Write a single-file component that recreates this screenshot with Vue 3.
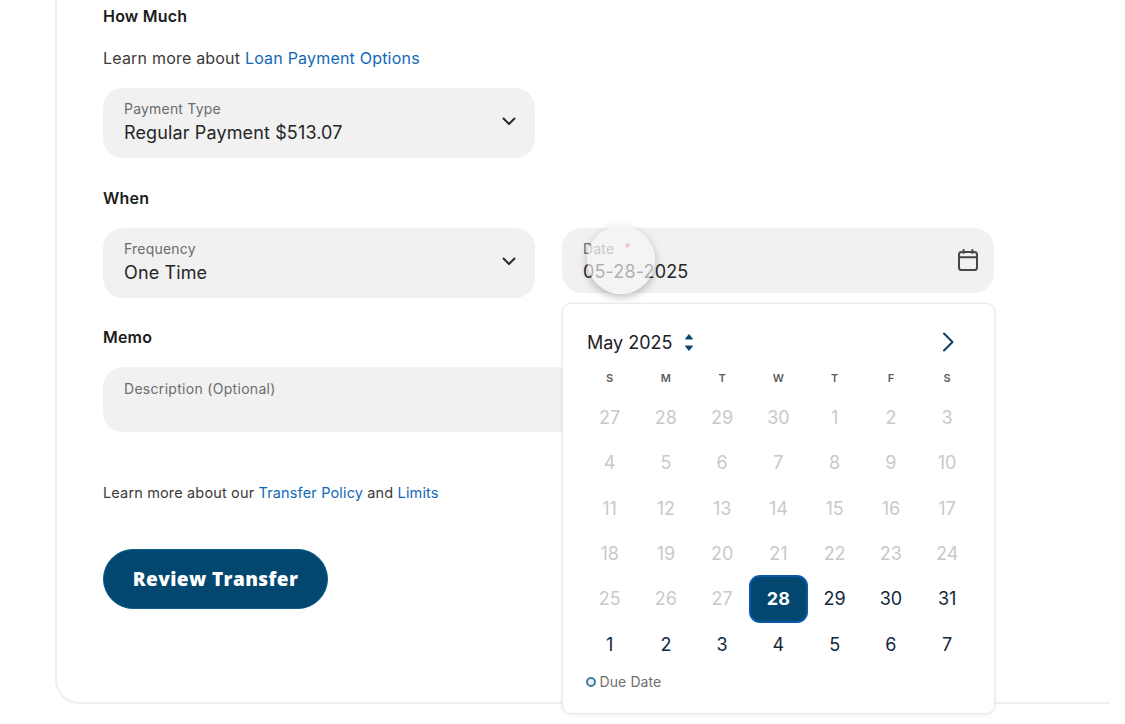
<script setup>
const weekdays = ['S', 'M', 'T', 'W', 'T', 'F', 'S']
const days = [
  27, 28, 29, 30, 1, 2, 3, 4, 5, 6, 7, 8, 9, 10, 11, 12, 13, 14, 15, 16, 17,
  18, 19, 20, 21, 22, 23, 24, 25, 26, 27, 28, 29, 30, 31, 1, 2, 3, 4, 5, 6, 7,
].map((n, i) => ({
  n,
  id: i,
  muted: i < 31,
  selected: i === 31,
}))
</script>

<template>
  <div class="page">
    <main class="card">
      <h2 class="heading first">How Much</h2>
      <p class="learn">Learn more about <a class="link">Loan Payment Options</a></p>

      <div class="field select">
        <div class="stack">
          <div class="label">Payment Type</div>
          <div class="value">Regular Payment $513.07</div>
        </div>
        <svg class="chev" viewBox="0 0 14 9" width="14" height="9"><path d="M1.5 1.5 7 7l5.5-5.5" fill="none" stroke="#2b2b2b" stroke-width="2" stroke-linecap="round" stroke-linejoin="round" /></svg>
      </div>

      <h2 class="heading when">When</h2>
      <div class="when-row">
        <div class="field select">
          <div class="stack">
            <div class="label">Frequency</div>
            <div class="value">One Time</div>
          </div>
          <svg class="chev" viewBox="0 0 14 9" width="14" height="9"><path d="M1.5 1.5 7 7l5.5-5.5" fill="none" stroke="#2b2b2b" stroke-width="2" stroke-linecap="round" stroke-linejoin="round" /></svg>
        </div>

        <div class="date-wrap">
          <div class="field date">
            <div class="date-stack">
              <div class="label">Date <span class="req">*</span></div>
              <div class="value">05-28-2025</div>
            </div>
            <svg class="cal" viewBox="0 0 20 22" width="20" height="22" fill="none" stroke="#43484b" stroke-width="2" stroke-linecap="round"><rect x="1" y="3" width="18" height="18" rx="2.6" /><path d="M1 8.2h18M5.6 1v3M14.4 1v3" /></svg>
          </div>
          <div class="spot"></div>

          <div class="pop">
            <div class="pop-head">
              <div class="month">May 2025
                <svg class="updown" viewBox="0 0 12 20" width="12" height="20"><path d="M2.5 7 6 2.5 9.5 7z" fill="#0d4a70" stroke="#0d4a70" stroke-width="1" stroke-linejoin="round" /><path d="M2.5 14 6 18.5 9.5 14z" fill="#0d4a70" stroke="#0d4a70" stroke-width="1" stroke-linejoin="round" /></svg>
              </div>
              <svg class="next" viewBox="0 0 12 20" width="12" height="20"><path d="M2 1.5 10.5 10 2 18.5" fill="none" stroke="#0e3a5c" stroke-width="2" stroke-linecap="round" stroke-linejoin="round" /></svg>
            </div>
            <div class="weekdays">
              <span v-for="(w, i) in weekdays" :key="i">{{ w }}</span>
            </div>
            <div class="days">
              <span v-for="d in days" :key="d.id" class="day" :class="{ muted: d.muted, selected: d.selected }">{{ d.n }}</span>
            </div>
            <div class="legend"><i class="ring"></i>Due Date</div>
          </div>
        </div>
      </div>

      <h2 class="heading memo">Memo</h2>
      <div class="field description">
        <div class="label">Description (Optional)</div>
      </div>

      <p class="policy">Learn more about our <a class="link">Transfer Policy</a> and <a class="link">Limits</a></p>

      <button class="review">Review Transfer</button>
    </main>
  </div>
</template>

<style scoped>
.page {
  width: 1125px;
  height: 724px;
  overflow: hidden;
  background: #fff;
  font-family: Inter, "Liberation Sans", sans-serif;
  color: #1f1f1f;
}
.card {
  box-sizing: border-box;
  width: 1055px;
  height: 704px;
  margin-left: 55px;
  padding-left: 46px;
  border-left: 2px solid #efefef;
  border-bottom: 2px solid #efefef;
  border-bottom-left-radius: 24px;
}
.heading {
  margin: 0;
  font-size: 16px;
  line-height: 20px;
  font-weight: 600;
  letter-spacing: 0.2px;
  color: #1c1c1c;
}
.first { padding-top: 6px; }
.learn {
  margin: 22px 0 20px;
  font-size: 16px;
  line-height: 20px;
  letter-spacing: 0.2px;
  color: #3a3a3a;
}
.link { color: #1268b8; }
.field {
  box-sizing: border-box;
  background: #f1f1f1;
  border-radius: 20px;
  display: flex;
  align-items: center;
  justify-content: space-between;
  padding: 0 17px 0 21px;
}
.select { width: 432px; height: 70px; }
.stack { padding-bottom: 1px; }
.date-stack { padding-top: 2px; }
.label {
  font-size: 14px;
  line-height: 18px;
  color: #6c6c6c;
  letter-spacing: 0.2px;
}
.value {
  font-size: 18px;
  line-height: 24px;
  letter-spacing: 0.13px;
  color: #262626;
  margin-top: 3px;
}
.date-stack .value { margin-top: 2px; }
.chev { margin: 0 2px 4px 0; }
.when { margin-top: 29.5px; }
.when-row {
  display: flex;
  align-items: flex-start;
  gap: 27px;
  margin-top: 20.5px;
}
.date-wrap { position: relative; width: 432px; }
.date { height: 65px; padding-right: 16px; }
.cal { margin-bottom: 1px; }
.req { color: #e0403a; font-size: 12px; margin-left: 6px; vertical-align: 2px; }
.spot {
  position: absolute;
  left: 25px;
  top: -2px;
  width: 68px;
  height: 68px;
  border-radius: 50%;
  background: rgba(246, 246, 246, 0.66);
  box-shadow: 0 3px 9px rgba(0, 0, 0, 0.26);
}
.pop {
  position: absolute;
  z-index: 2;
  left: 0;
  top: 75px;
  box-sizing: border-box;
  width: 433px;
  height: 411px;
  background: #fff;
  border: 1px solid #e9e9e9;
  border-radius: 9px;
  box-shadow: 0 1px 4px rgba(0, 0, 0, 0.08);
  padding: 0 18.5px;
}
.pop-head {
  display: flex;
  align-items: center;
  justify-content: space-between;
  height: 30px;
  margin-top: 23px;
  padding: 0 22px 0 5.5px;
}
.month {
  display: flex;
  align-items: center;
  gap: 10px;
  font-size: 18px;
  color: #1e2226;
}
.weekdays, .days {
  display: grid;
  grid-template-columns: repeat(7, 56.25px);
  justify-content: start;
  text-align: center;
}
.weekdays {
  margin-top: 11px;
  height: 20px;
  line-height: 20px;
  font-size: 11px;
  font-weight: 600;
  color: #5c5c5c;
}
.days {
  grid-auto-rows: 45.3px;
  margin-top: 7px;
}
.day {
  display: flex;
  align-items: center;
  justify-content: center;
  font-size: 18px;
  color: #12283a;
  border-radius: 11px;
  box-sizing: border-box;
}
.muted { color: #c9c9c9; }
.selected {
  width: 59px;
  height: 48px;
  justify-self: center;
  align-self: center;
  background: #02476f;
  border: 2px solid #0b57a8;
  color: #fff;
  font-weight: 700;
}
.legend {
  display: flex;
  align-items: center;
  gap: 4px;
  margin-top: 5px;
  margin-left: 4px;
  font-size: 14px;
  line-height: 20px;
  letter-spacing: 0.1px;
  color: #6f6f6f;
}
.ring {
  width: 6px;
  height: 6px;
  border: 2px solid #3f7f9f;
  border-radius: 50%;
  background: #e6f0f5;
}
.memo { margin-top: 29px; }
.description {
  width: 892px;
  height: 65px;
  margin-top: 20px;
  align-items: flex-start;
  padding-top: 13px;
}
.description .label { letter-spacing: 0.3px; }
.policy {
  margin: 51px 0 0;
  font-size: 14.5px;
  line-height: 20px;
  letter-spacing: 0.15px;
  color: #3a3a3a;
}
.review {
  display: block;
  margin-top: 46px;
  width: 225px;
  height: 60px;
  padding: 0;
  border: 1px solid #0c5f8a;
  border-radius: 30px;
  background: #02476f;
  color: #fff;
  font-family: "Open Sans", sans-serif;
  font-size: 19px;
  font-weight: 800;
  letter-spacing: 0.4px;
}
</style>
